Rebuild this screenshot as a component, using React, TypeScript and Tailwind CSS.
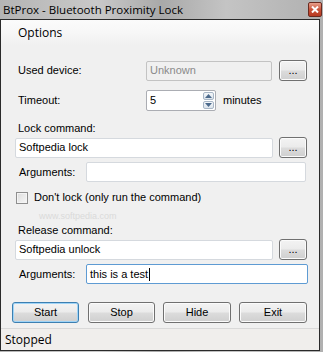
import { useState } from 'react';

const ui = { fontFamily: '"Liberation Sans", Arial, sans-serif' };
const seg = { fontFamily: '"Open Sans", "Liberation Sans", sans-serif' };

function Field({ value, className = '', disabled = false, focused = false, onChange }: {
  value: string;
  className?: string;
  disabled?: boolean;
  focused?: boolean;
  onChange?: (v: string) => void;
}) {
  return (
    <div
      className={`flex h-[20px] items-center rounded-[2px] border px-[3px] ${
        focused
          ? 'border-[#5e9bd3] bg-white'
          : disabled
            ? 'border-[#c3c3c3] bg-[#f0f0f0]'
            : 'border-[#d5d9de] bg-white'
      } ${className}`}
    >
      {focused ? (
        <>
          <span className="text-[11px] text-black" style={ui}>{value}</span>
          <span className="ml-px h-[13px] w-px bg-black" />
        </>
      ) : (
        <input
          type="text"
          value={value}
          disabled={disabled}
          onChange={(e) => onChange?.(e.target.value)}
          className={`w-full bg-transparent text-[11px] outline-none ${disabled ? 'text-[#8a8a8a]' : 'text-black'}`}
          style={ui}
        />
      )}
    </div>
  );
}

function WinButton({ label, className = '', focused = false }: { label: string; className?: string; focused?: boolean }) {
  return (
    <button
      className={`flex h-[21px] items-center justify-center rounded-[3px] border bg-[linear-gradient(#f3f3f3_0%,#ebebeb_48%,#dcdcdc_52%,#cfcfcf_100%)] text-[11px] text-black ${
        focused
          ? 'border-[#3c7fb1] shadow-[inset_0_0_0_1px_#9fd4f7]'
          : 'border-[#707070] shadow-[inset_0_0_0_1px_#fbfbfb]'
      } ${className}`}
      style={ui}
    >
      {label}
    </button>
  );
}

function Spinner() {
  return (
    <div className="flex w-[15px] flex-col gap-px py-px pr-px">
      <div className="flex h-[8px] items-center justify-center rounded-[2px] border border-[#a8b6c6] bg-[linear-gradient(#f4f7fa,#dce4ec)]">
        <svg width="7" height="4" viewBox="0 0 7 4"><path d="M0 4 L3.5 0 L7 4 Z" fill="#4c6a8c" /></svg>
      </div>
      <div className="flex h-[8px] items-center justify-center rounded-[2px] border border-[#a8b6c6] bg-[linear-gradient(#f4f7fa,#dce4ec)]">
        <svg width="7" height="4" viewBox="0 0 7 4"><path d="M0 0 L3.5 4 L7 0 Z" fill="#4c6a8c" /></svg>
      </div>
    </div>
  );
}

export default function App() {
  const [lockCmd, setLockCmd] = useState('Softpedia lock');
  const [lockArgs, setLockArgs] = useState('');
  const [releaseCmd, setReleaseCmd] = useState('Softpedia unlock');
  const [releaseArgs, setReleaseArgs] = useState('this is a test');
  const [timeout, setTimeoutValue] = useState('5');
  const [dontLock, setDontLock] = useState(false);

  return (
    <div className="relative h-[352px] w-[323px] overflow-hidden bg-[linear-gradient(90deg,#b4b4b4_0%,#c9c9c9_30%,#a9a9a9_50%,#c4c4c4_70%,#b0b0b0_100%)]">
      {/* title bar */}
      <div className="flex h-[19px] items-center justify-between pl-[3px] pr-px">
        <span className="text-[11.5px] leading-none text-black" style={seg}>
          BtProx - Bluetooth Proximity Lock
        </span>
        <div className="flex h-[15px] w-[14px] items-center justify-center rounded-[2px] border border-[#6b2b20] bg-[linear-gradient(#e8a08c,#c9533a_50%,#b83a22)]">
          <svg width="8" height="7" viewBox="0 0 8 7">
            <path d="M1 0.5 L7 6.5 M7 0.5 L1 6.5" stroke="white" strokeWidth="2" />
          </svg>
        </div>
      </div>

      {/* client area */}
      <div className="flex h-[332px] w-[320px] flex-col border border-[#2a2a2a] bg-[#f0f0f0]">
        {/* menu */}
        <div className="flex h-[25px] items-center bg-[linear-gradient(#fbfbfb_0%,#f7f7f7_50%,#f0f0f0_100%)] pl-[17px]">
          <span className="text-[12px] text-black" style={seg}>Options</span>
        </div>

        <div className="relative flex flex-1 flex-col pl-[14px] text-[11px] text-black" style={ui}>
          <div className="pointer-events-none absolute left-[38px] top-[166px] text-[9px] leading-[10px] text-[#dadada]">
            www.softpedia.com
          </div>

          <div className="mt-[15px] flex h-[21px] items-center">
            <span className="w-[131px] pl-[3px]">Used device:</span>
            <Field value="Unknown" disabled className="w-[126px]" />
            <WinButton label="..." className="ml-[7px] w-[28px]" />
          </div>

          <div className="mt-[8px] flex h-[22px] items-center">
            <span className="w-[131px] pl-[3px]">Timeout:</span>
            <div className="flex h-[21px] w-[70px] items-center rounded-[2px] border border-[#abadb3] bg-white pl-[3px]">
              <input
                type="text"
                value={timeout}
                onChange={(e) => setTimeoutValue(e.target.value)}
                className="w-full bg-transparent text-[11px] outline-none"
                style={ui}
              />
              <Spinner />
            </div>
            <span className="ml-[7px]">minutes</span>
          </div>

          <div className="mt-[11px] pl-[3px] leading-[13px]">Lock command:</div>
          <div className="mt-[2px] flex h-[21px] items-center">
            <Field value={lockCmd} onChange={setLockCmd} className="w-[258px]" />
            <WinButton label="..." className="ml-[6px] w-[28px]" />
          </div>

          <div className="mt-[4px] flex h-[20px] items-center">
            <span className="w-[71px] pl-[4px]">Arguments:</span>
            <Field value={lockArgs} onChange={setLockArgs} className="w-[220px]" />
          </div>

          <label className="mt-[9px] flex h-[13px] items-center">
            <input
              type="checkbox"
              checked={dontLock}
              onChange={(e) => setDontLock(e.target.checked)}
              className="peer sr-only"
            />
            <span className="ml-[1px] h-[12px] w-[12px] border border-[#8f8f8f] bg-[linear-gradient(135deg,#dcdcdc,#f7f7f7)] shadow-[inset_0_0_0_1px_#f4f4f4]" />
            <span className="ml-[6px]">Don't lock (only run the command)</span>
          </label>

          <div className="mt-[20px] pl-[3px] leading-[13px]">Release command:</div>
          <div className="mt-[2px] flex h-[21px] items-center">
            <Field value={releaseCmd} onChange={setReleaseCmd} className="w-[258px]" />
            <WinButton label="..." className="ml-[6px] w-[28px]" />
          </div>

          <div className="mt-[4px] flex h-[20px] items-center">
            <span className="w-[71px] pl-[4px]">Arguments:</span>
            <Field value={releaseArgs} onChange={setReleaseArgs} focused className="w-[222px]" />
          </div>

          <div className="mt-[18px] flex h-[21px] items-center">
            <WinButton label="Start" focused className="ml-[-3px] w-[67px]" />
            <WinButton label="Stop" className="ml-[9px] w-[67px]" />
            <WinButton label="Hide" className="ml-[8px] w-[68px]" />
            <WinButton label="Exit" className="ml-[8px] w-[68px]" />
          </div>
        </div>

        {/* status bar */}
        <div className="flex h-[22px] items-center border-t border-[#d9d9d9] bg-[#f0eeec] pl-[4px]">
          <span className="text-[12px] text-black" style={seg}>Stopped</span>
        </div>
      </div>
    </div>
  );
}
